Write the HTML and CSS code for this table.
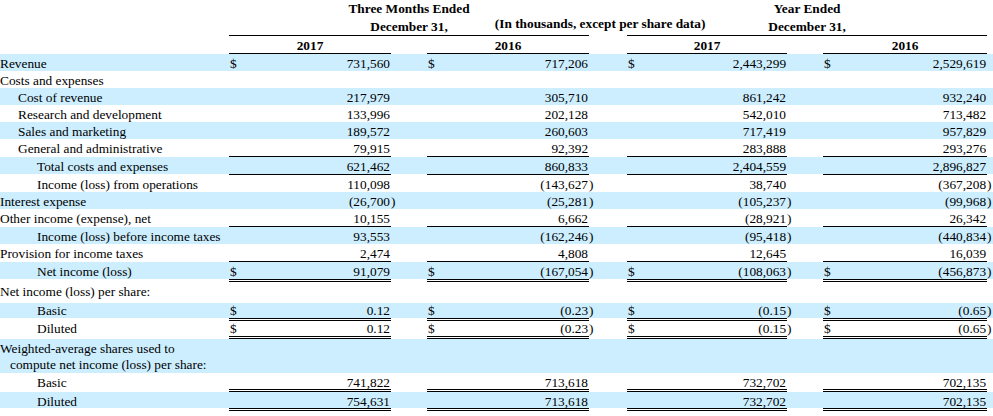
FILE: index.html
```html
<!DOCTYPE html>
<html>
<head>
<meta charset="utf-8">
<link rel="stylesheet" href="styles.css">
</head>
<body>
<table class="fin">
<colgroup>
<col class="c-lbl"><col class="c-cur"><col class="c-num1"><col class="c-par1">
<col class="c-cur"><col class="c-num1"><col class="c-par2">
<col class="c-cur"><col class="c-num3"><col class="c-par1">
<col class="c-cur"><col class="c-num4"><col class="c-par4">
</colgroup>
<tr class="h1">
<td></td>
<td colspan="5" class="hd">Three Months Ended<br>December 31,</td>
<td class="note"><div class="note-in"><span>(In thousands, except per share data)</span></div></td>
<td colspan="5" class="hd">Year Ended<br>December 31,</td>
<td></td>
</tr>
<tr class="h2">
<td></td>
<td colspan="2" class="hd">2017</td><td></td>
<td colspan="2" class="hd">2016</td><td></td>
<td colspan="2" class="hd">2017</td><td></td>
<td colspan="2" class="hd">2016</td><td></td>
</tr>
<tr class="b"><td>Revenue</td><td class="cur">$</td><td class="num">731,560</td><td class="par"></td><td class="cur">$</td><td class="num">717,206</td><td class="par"></td><td class="cur">$</td><td class="num">2,443,299</td><td class="par"></td><td class="cur">$</td><td class="num">2,529,619</td><td class="par"></td></tr>
<tr><td>Costs and expenses</td><td class="cur"></td><td class="num"></td><td class="par"></td><td class="cur"></td><td class="num"></td><td class="par"></td><td class="cur"></td><td class="num"></td><td class="par"></td><td class="cur"></td><td class="num"></td><td class="par"></td></tr>
<tr class="b"><td class="i1">Cost of revenue</td><td class="cur"></td><td class="num">217,979</td><td class="par"></td><td class="cur"></td><td class="num">305,710</td><td class="par"></td><td class="cur"></td><td class="num">861,242</td><td class="par"></td><td class="cur"></td><td class="num">932,240</td><td class="par"></td></tr>
<tr><td class="i1">Research and development</td><td class="cur"></td><td class="num">133,996</td><td class="par"></td><td class="cur"></td><td class="num">202,128</td><td class="par"></td><td class="cur"></td><td class="num">542,010</td><td class="par"></td><td class="cur"></td><td class="num">713,482</td><td class="par"></td></tr>
<tr class="b"><td class="i1">Sales and marketing</td><td class="cur"></td><td class="num">189,572</td><td class="par"></td><td class="cur"></td><td class="num">260,603</td><td class="par"></td><td class="cur"></td><td class="num">717,419</td><td class="par"></td><td class="cur"></td><td class="num">957,829</td><td class="par"></td></tr>
<tr class="s"><td class="i1">General and administrative</td><td class="cur"></td><td class="num">79,915</td><td class="par"></td><td class="cur"></td><td class="num">92,392</td><td class="par"></td><td class="cur"></td><td class="num">283,888</td><td class="par"></td><td class="cur"></td><td class="num">293,276</td><td class="par"></td></tr>
<tr class="b s"><td class="i2">Total costs and expenses</td><td class="cur"></td><td class="num">621,462</td><td class="par"></td><td class="cur"></td><td class="num">860,833</td><td class="par"></td><td class="cur"></td><td class="num">2,404,559</td><td class="par"></td><td class="cur"></td><td class="num">2,896,827</td><td class="par"></td></tr>
<tr><td class="i2">Income (loss) from operations</td><td class="cur"></td><td class="num">110,098</td><td class="par"></td><td class="cur"></td><td class="num">(143,627</td><td class="par">)</td><td class="cur"></td><td class="num">38,740</td><td class="par"></td><td class="cur"></td><td class="num">(367,208</td><td class="par">)</td></tr>
<tr class="b"><td>Interest expense</td><td class="cur"></td><td class="num">(26,700</td><td class="par">)</td><td class="cur"></td><td class="num">(25,281</td><td class="par">)</td><td class="cur"></td><td class="num">(105,237</td><td class="par">)</td><td class="cur"></td><td class="num">(99,968</td><td class="par">)</td></tr>
<tr class="s"><td>Other income (expense), net</td><td class="cur"></td><td class="num">10,155</td><td class="par"></td><td class="cur"></td><td class="num">6,662</td><td class="par"></td><td class="cur"></td><td class="num">(28,921</td><td class="par">)</td><td class="cur"></td><td class="num">26,342</td><td class="par"></td></tr>
<tr class="b"><td class="i2">Income (loss) before income taxes</td><td class="cur"></td><td class="num">93,553</td><td class="par"></td><td class="cur"></td><td class="num">(162,246</td><td class="par">)</td><td class="cur"></td><td class="num">(95,418</td><td class="par">)</td><td class="cur"></td><td class="num">(440,834</td><td class="par">)</td></tr>
<tr class="s"><td>Provision for income taxes</td><td class="cur"></td><td class="num">2,474</td><td class="par"></td><td class="cur"></td><td class="num">4,808</td><td class="par"></td><td class="cur"></td><td class="num">12,645</td><td class="par"></td><td class="cur"></td><td class="num">16,039</td><td class="par"></td></tr>
<tr class="b d"><td class="i2">Net income (loss)</td><td class="cur">$</td><td class="num">91,079</td><td class="par"></td><td class="cur">$</td><td class="num">(167,054</td><td class="par">)</td><td class="cur">$</td><td class="num">(108,063</td><td class="par">)</td><td class="cur">$</td><td class="num">(456,873</td><td class="par">)</td></tr>
<tr class="gap"><td>Net income (loss) per share:</td><td class="cur"></td><td class="num"></td><td class="par"></td><td class="cur"></td><td class="num"></td><td class="par"></td><td class="cur"></td><td class="num"></td><td class="par"></td><td class="cur"></td><td class="num"></td><td class="par"></td></tr>
<tr class="b d eps"><td class="i2">Basic</td><td class="cur">$</td><td class="num">0.12</td><td class="par"></td><td class="cur">$</td><td class="num">(0.23</td><td class="par">)</td><td class="cur">$</td><td class="num">(0.15</td><td class="par">)</td><td class="cur">$</td><td class="num">(0.65</td><td class="par">)</td></tr>
<tr class="d eps"><td class="i2">Diluted</td><td class="cur">$</td><td class="num">0.12</td><td class="par"></td><td class="cur">$</td><td class="num">(0.23</td><td class="par">)</td><td class="cur">$</td><td class="num">(0.15</td><td class="par">)</td><td class="cur">$</td><td class="num">(0.65</td><td class="par">)</td></tr>
<tr class="b two"><td class="hang">Weighted-average shares used to compute net income (loss) per share:</td><td class="cur"></td><td class="num"></td><td class="par"></td><td class="cur"></td><td class="num"></td><td class="par"></td><td class="cur"></td><td class="num"></td><td class="par"></td><td class="cur"></td><td class="num"></td><td class="par"></td></tr>
<tr class="d shr"><td class="i2">Basic</td><td class="cur"></td><td class="num">741,822</td><td class="par"></td><td class="cur"></td><td class="num">713,618</td><td class="par"></td><td class="cur"></td><td class="num">732,702</td><td class="par"></td><td class="cur"></td><td class="num">702,135</td><td class="par"></td></tr>
<tr class="b d shr"><td class="i2">Diluted</td><td class="cur"></td><td class="num">754,631</td><td class="par"></td><td class="cur"></td><td class="num">713,618</td><td class="par"></td><td class="cur"></td><td class="num">732,702</td><td class="par"></td><td class="cur"></td><td class="num">702,135</td><td class="par"></td></tr>
</table>
</body>
</html>
```
FILE: styles.css
```css
html, body {
  margin: 0;
  padding: 0;
  background: #fff;
}
body {
  font-family: "Liberation Serif", "Times New Roman", serif;
  font-size: 10pt;
  color: #000;
}
.fin {
  width: 993px;
  table-layout: fixed;
  border-collapse: separate;
  border-spacing: 0;
}
.c-lbl { width: 229px; }
.c-cur { width: 14px; }
.c-num1 { width: 148px; }
.c-num3 { width: 146px; }
.c-num4 { width: 150px; }
.c-par1 { width: 36px; }
.c-par2 { width: 38px; }
.c-par4 { width: 6px; }

.fin td {
  padding: 2px 0 0 0;
  line-height: 15px;
  white-space: nowrap;
  vertical-align: top;
  background-clip: padding-box;
}
.fin tr.b td { background-color: #cceeff; }

.fin tr.h1 td {
  padding: 0;
  line-height: 17.5px;
  vertical-align: bottom;
}
.fin td.hd {
  font-weight: bold;
  text-align: center;
  border-bottom: 1px solid #000;
}
.fin tr.h1 td.note {
  padding-bottom: 5px;
  font-weight: bold;
}
.note-in {
  display: flex;
  justify-content: center;
  margin-right: 16px;
  line-height: 15px;
}
.note-in span { white-space: nowrap; }

.fin td.cur { padding-left: 1px; }
.fin td.num { text-align: right; padding-right: 1px; }
.fin td.par { text-align: left; }
.fin td.i1 { padding-left: 18px; }
.fin td.i2 { padding-left: 37px; }
.fin tr.two td { padding-top: 2px; line-height: 16px; }
.fin td.hang {
  white-space: normal;
  padding-left: 10px;
  text-indent: -10px;
  padding-right: 20px;
}

.fin tr.s td { border-bottom: 1px solid transparent; }
.fin tr.s td.cur, .fin tr.s td.num { border-bottom-color: #000; }
.fin tr.d td { border-bottom: 3px double transparent; }
.fin tr.d td.cur, .fin tr.d td.num { border-bottom-color: #000; }
.fin tr.gap td { padding-top: 2px; padding-bottom: 4px; }
.fin tr.eps td { padding-top: 0; }
.fin tr.shr td { padding-top: 3px; line-height: 13px; }
```
